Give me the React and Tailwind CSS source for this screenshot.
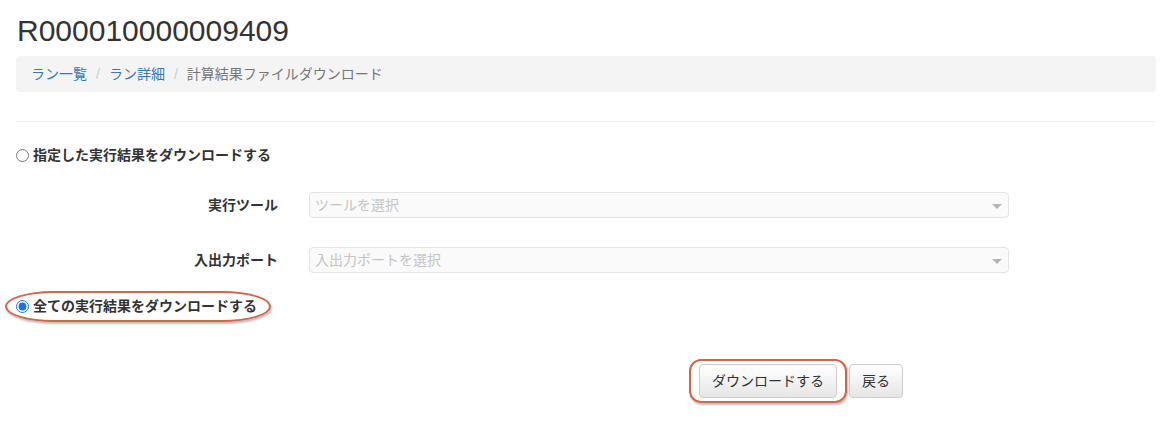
import { useState } from "react"

const font = { fontFamily: '"Liberation Sans", "Noto Sans CJK JP", sans-serif' }

function SelectBox({ placeholder }) {
  return (
    <div className="relative w-[700px] h-[26px] rounded border border-[#e3e3e3] bg-[#fafafa] flex items-center px-[5px] text-[14px] font-normal text-[#c4c4c4]">
      {placeholder}
      <span className="absolute right-[6px] top-[11px] w-0 h-0 border-x-[5px] border-x-transparent border-t-[5px] border-t-[#b4b4b4]" />
    </div>
  )
}

export default function App() {
  const [mode, setMode] = useState("all")

  return (
    <div className="min-h-screen bg-white text-[#333]" style={font}>
      <div className="px-4 pt-[13px] w-[1172px]">
        <h1 className="text-[30px] leading-[36px] text-[#333] ml-[1px]">R000010000009409</h1>

        <div className="mt-[7px] h-[36px] rounded bg-[#f4f4f4] flex items-center px-[15px] text-[14px] w-[1140px]">
          <a className="text-[#337ab7]">ラン一覧</a>
          <span className="px-[9px] text-[#ccc]">/</span>
          <a className="text-[#337ab7]">ラン詳細</a>
          <span className="px-[9px] text-[#ccc]">/</span>
          <span className="text-[#777]">計算結果ファイルダウンロード</span>
        </div>

        <hr className="mt-[29px] border-t border-[#eee] w-[1140px]" />

        <form className="text-[14px] font-bold">
          <label className="mt-[23px] flex items-center gap-[4px] h-[20px] cursor-pointer">
            <input
              type="radio"
              name="mode"
              checked={mode === "select"}
              onChange={() => setMode("select")}
              className="w-[13px] h-[13px] m-0"
            />
            指定した実行結果をダウンロードする
          </label>

          <div className="mt-[27px] flex items-center">
            <div className="w-[262px] text-right">実行ツール</div>
            <div className="ml-[31px]">
              <SelectBox placeholder="ツールを選択" />
            </div>
          </div>

          <div className="mt-[29px] flex items-center">
            <div className="w-[262px] text-right">入出力ポート</div>
            <div className="ml-[31px]">
              <SelectBox placeholder="入出力ポートを選択" />
            </div>
          </div>

          {/* highlighted option */}
          <div className="mt-[18px] -ml-[11px] w-[266px] h-[31px] rounded-[50px/16px] border-2 border-[#d0664a] shadow-[1px_2px_2px_rgba(0,0,0,0.25)] flex items-center pl-[9px]">
            <label className="flex items-center gap-[4px] cursor-pointer">
              <input
                type="radio"
                name="mode"
                checked={mode === "all"}
                onChange={() => setMode("all")}
                className="w-[13px] h-[13px] m-0 accent-[#1a73e8]"
              />
              全ての実行結果をダウンロードする
            </label>
          </div>

          <div className="mt-[37px] ml-[673px] flex items-center gap-[2px] font-normal">
            <div className="rounded-[12px] border-2 border-[#d0664a] shadow-[1px_2px_2px_rgba(0,0,0,0.25)] px-[8px] py-[3px]">
              <button
                type="button"
                className="h-[34px] px-[12px] rounded border border-[#ccc] bg-gradient-to-b from-white to-[#e6e6e6] text-[14px] text-[#333]"
              >
                ダウンロードする
              </button>
            </div>
            <button
              type="button"
              className="h-[34px] px-[12px] rounded border border-[#ccc] bg-gradient-to-b from-white to-[#e6e6e6] text-[14px] text-[#333]"
            >
              戻る
            </button>
          </div>
        </form>
      </div>
    </div>
  )
}
